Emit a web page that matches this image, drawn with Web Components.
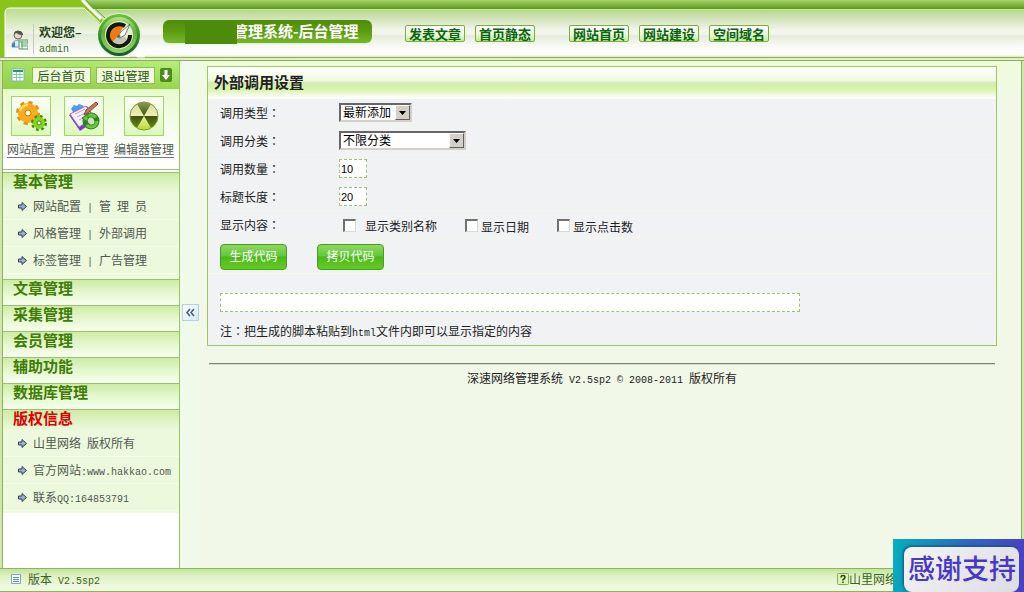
<!DOCTYPE html>
<html lang="zh-CN">
<head>
<meta charset="utf-8">
<meta name="viewport" content="width=device-width, initial-scale=1">
<title>后台管理</title>
<style>
    html {
        height: 100%;
    }

    body {
        margin: 0;
        min-height: 100%;
        display: flex;
        flex-direction: column;
        background: #f1f8e7;
        color: #222;
        font: 12px/16px "Noto Sans CJK SC", sans-serif;
    }

    .middle {
        flex: 1;
        display: flex;
        border: solid #8fb35c;
        border-width: 0 1px;
        margin: 0 2px;
        box-shadow: -2px 0 #d0e6ac, 2px 0 #d0e6ac;
    }

    .content {
        flex: 1;
        min-width: 0;
        padding: 5px 24px 16px 8px;
        background: linear-gradient(#eefddc, #f1f8e7 40px);
    }
</style>
</head>
<body>

<admin-header user="admin">
    <nav-link href="#post">发表文章</nav-link>
    <nav-link href="#static">首页静态</nav-link>
    <nav-link href="#home" apart>网站首页</nav-link>
    <nav-link href="#build">网站建设</nav-link>
    <nav-link href="#domain">空间域名</nav-link>
</admin-header>

<div class="middle">
    <admin-sidebar></admin-sidebar>
    <side-toggle></side-toggle>
    <main class="content">
        <call-settings></call-settings>
        <page-copyright></page-copyright>
    </main>
</div>

<status-bar></status-bar>
<thanks-badge>感谢支持</thanks-badge>

<script>
// half-width characters take half of a chinese one, so they get their own font and size
const half = text => text.replace(/[\x20-\x7e©]+/g, '<span class="half">$&</span>')

// styles that every shadow root needs
const base = `
    * { box-sizing: border-box; }
    a { color: inherit; text-decoration: none; }
    svg { display: block; }
    .half { font: 10px/12px "Liberation Mono", monospace; white-space: pre; }
    .colon { font-family: "Noto Sans CJK TC", sans-serif; }
`

class BaseElement extends HTMLElement {
    constructor() {
        super()
        this.root = this.attachShadow({mode: 'open'})
    }

    connectedCallback() {
        this.root.innerHTML = `<style>${base}</style>${this.render()}`
    }
}

class AdminHeader extends BaseElement {
    render() {
        return `
        <style>
            :host {
                display: flex;
                align-items: flex-start;
                height: 61px;
                background:
                    linear-gradient(#8fae62, #8fae62) 0 57px / 100% 1px no-repeat,
                    linear-gradient(#8fae62, #8fae62) 0 60px / 100% 1px no-repeat,
                    linear-gradient(#a4d56c, #5b971d 9px, #c4f08c 9px, #c4f08c 10px, #b5d78c 10px,
                        #d6e5c0 20px, #f2f5ea 30px, #f2f4ea 35px, #e5ebda 35px, #fbfcf9 48px,
                        #fff 55px, #dff0c4 56px, #dff0c4 61px);
            }

            .corner {
                display: grid;
                width: 145px;
                flex: none;
            }

            .corner > * {
                grid-area: 1 / 1;
            }

            .user {
                display: flex;
                gap: 5px;
                padding: 24px 0 0 11px;
            }

            .user svg {
                margin-top: 6px;
            }

            .name {
                border-left: 1px solid #c3ccb8;
                padding-left: 5px;
                height: 30px;
                color: #3c6a1c;
            }

            .name b {
                display: block;
                font-size: 12px;
                line-height: 15px;
                color: #24421a;
            }

            .title {
                display: flex;
                align-items: flex-start;
                width: 209px;
                height: 23px;
                margin: 20px 0 0 18px;
                padding-left: 22px;
                border-radius: 6px;
                background: linear-gradient(#4f8c08, #5c9c12 50%, #74b828);
                box-shadow: 0 1px 1px #dcebc8;
                color: #fff;
            }

            .cover {
                position: relative;
                width: 52px;
                height: 22px;
                margin-top: 2px;
                background: #4d8b0c;
            }

            h1 {
                margin: 0 0 0 -4px;
                font-size: 15px;
                line-height: 22px;
                white-space: nowrap;
            }

            nav {
                display: flex;
                gap: 10px;
                padding: 25px 0 0 33px;
            }
        </style>
        <div class="corner">
            <svg width="145" height="61" viewBox="0 0 145 61">
                <defs>
                    <linearGradient id="card" x2="0" y2="1">
                        <stop offset="0" stop-color="#b9dc8c"/><stop offset=".5" stop-color="#eef4e4"/>
                        <stop offset=".55" stop-color="#e4ecd8"/><stop offset="1" stop-color="#fff"/>
                    </linearGradient>
                    <linearGradient id="rim" x2="0" y2="1">
                        <stop offset="0" stop-color="#6cc434"/><stop offset=".6" stop-color="#2c8824"/>
                        <stop offset="1" stop-color="#14583c"/>
                    </linearGradient>
                    <linearGradient id="ring" x2="0" y2="1">
                        <stop offset="0" stop-color="#b4e48c"/><stop offset=".4" stop-color="#64ac3c"/>
                        <stop offset="1" stop-color="#94d464"/>
                    </linearGradient>
                </defs>
                <path d="M0 0H83L103 20V30H5V57H0z" fill="#8ac41a"/>
                <path d="M5 57V13q0-5 5-5H84L104 28L130 57z" fill="url(#card)"/>
                <path d="M5 57V13q0-5 5-5H84L101 24" fill="none" stroke="#fff"/>
                <path d="M82 0L101 19M132 50L138 56H145" fill="none" stroke="#fff" stroke-width="3"/>
                <path d="M86 0L105 18" stroke="#6ea830"/>
                <circle cx="119" cy="35" r="22" fill="#e4eed8"/>
                <circle cx="119" cy="35" r="21" fill="url(#rim)"/>
                <circle cx="119" cy="35" r="18" fill="url(#ring)"/>
                <circle cx="119" cy="35" r="14" fill="#dcf0cc"/>
                <circle cx="119" cy="35" r="10" fill="#f0e8dc"/>
                <path d="M119 35L113 42A9 9 0 0 1 123 27z" fill="#f47818"/>
                <path d="M119 35L113 42A9 9 0 0 0 127 38z" fill="#c4c4bc"/>
                <path d="M125 26A11 11 0 1 0 130 35" fill="none" stroke="#101c08" stroke-width="4"/>
                <path d="M117 37L121 32L130 24L125 35L120 38z" fill="#fff" stroke="#50603c" stroke-width=".8"/>
                <circle cx="119" cy="36" r="1.500" fill="#4b8420"/>
            </svg>
            <div class="user">
                <svg width="17" height="20" viewBox="0 0 17 20">
                    <circle cx="7" cy="5" r="4" fill="#f0d4b8" stroke="#666"/>
                    <path d="M3 4q1-4 5-3q4 0 4 4q-5 0-6-2z" fill="#555"/>
                    <path d="M1 17q0-7 6-7q4 0 5 3v4z" fill="#dcecf8" stroke="#6c9cc0"/>
                    <path d="M1 14l3-2v5H1z" fill="#3c80c0"/>
                    <path d="M8 10h9v9H8z" fill="#f4fff0" stroke="#4a9860"/>
                    <path d="M8 12h9M10 14h6M10 16h6" stroke="#58a468"/>
                    <path d="M11 11v8" stroke="#58a468"/>
                </svg>
                <div class="name"><b>欢迎您–</b>${half(this.getAttribute('user'))}</div>
            </div>
        </div>
        <div class="title"><span class="cover"></span><h1>管理系统-后台管理</h1></div>
        <nav><slot></slot></nav>`
    }
}

class NavLink extends BaseElement {
    render() {
        return `
        <style>
            :host {
                display: block;
            }

            :host([apart]) {
                margin-left: 24px;
            }

            a {
                display: block;
                width: 60px;
                border: 1px solid #78ae3c;
                border-radius: 2px;
                background: linear-gradient(#fff, #eefae0 50%, #c4ec98);
                color: #0a6414;
                font-size: 13px;
                font-weight: bold;
                line-height: 15px;
                text-align: center;
                white-space: nowrap;
            }
        </style>
        <a href="${this.getAttribute('href')}"><slot></slot></a>`
    }
}

class AdminSidebar extends BaseElement {
    render() {
        return `
        <style>
            :host {
                display: block;
                flex: none;
                width: 176px;
                border-right: 1px solid #9cc464;
                background: #fff;
            }

            .tools {
                display: flex;
                align-items: center;
                gap: 5px;
                height: 28px;
                padding: 0 6px 0 8px;
                background: linear-gradient(90deg, #84c43c55, #a4e45c00), linear-gradient(#b8f078, #98d450);
            }

            .tools svg {
                flex: none;
            }

            .tools a {
                width: 59px;
                border: 1px solid #8cc04c;
                background: #effbdc;
                color: #285410;
                line-height: 15px;
                text-align: center;
                white-space: nowrap;
            }

            .tools svg:first-child {
                margin-right: 2px;
            }

            .shortcuts {
                display: flex;
                justify-content: space-between;
                height: 81px;
                margin-bottom: 2px;
                padding: 7px 5px 0 4px;
                border-bottom: 1px solid #9cc070;
                background: linear-gradient(#e6fbcc, #fff 80%);
            }
        </style>
        <div class="tools">
            <svg width="14" height="14" viewBox="0 0 14 14">
                <path d="M1 1h12v12H1z" fill="#fff" stroke="#7ab4d4"/>
                <path d="M2 2h10v2H2z" fill="#38945c"/>
                <path d="M2 6.500h10M2 9.500h10M5.500 4v9M9 4v9" stroke="#8cc4b8"/>
            </svg>
            <a href="#index">后台首页</a>
            <a href="#logout">退出管理</a>
            <svg width="12" height="14" viewBox="0 0 12 14">
                <rect width="12" height="14" rx="2" fill="#4c8c1c"/>
                <path d="M4.500 2h3v5H10L6 12L2 7h2.500z" fill="#fff"/>
            </svg>
        </div>
        <div class="shortcuts">
            <short-cut label="网站配置">
                <svg width="32" height="32" viewBox="0 0 32 32">
                    <circle cx="13" cy="13" r="10" fill="none" stroke="#e09010" stroke-width="4" stroke-dasharray="4 3.850"/>
                    <circle cx="13" cy="13" r="6.500" fill="none" stroke="#fbac1c" stroke-width="7"/>
                    <path d="M5 11q2-6 8-6" fill="none" stroke="#ffe07c" stroke-width="2"/>
                    <circle cx="13" cy="13" r="3" fill="#f4fce8" stroke="#c87808"/>
                    <circle cx="24" cy="23" r="6" fill="none" stroke="#3c8c10" stroke-width="4" stroke-dasharray="2.500 2.200"/>
                    <circle cx="24" cy="23" r="4" fill="none" stroke="#84d424" stroke-width="4"/>
                    <circle cx="24" cy="23" r="2" fill="#eefcd8" stroke="#3c8c10"/>
                </svg>
            </short-cut>
            <short-cut label="用户管理">
                <svg width="32" height="32" viewBox="0 0 32 32">
                    <path d="M3 9l3-4l3 1l2-2l5 2l-9 9z" fill="#4c9ce8"/>
                    <path d="M1 15L19 6L28 20L12 31z" fill="#7840b8"/>
                    <path d="M2 14L18 6L26 18L11 27z" fill="#f6f0fc" stroke="#a06cd4"/>
                    <path d="M7 14l10-5M9 17l8-4M11 20l6-3" stroke="#b4a4cc"/>
                    <path d="M28 2L18 10l-2 5l5-3L30 4z" fill="#c87858" stroke="#804838"/>
                    <circle cx="23" cy="21" r="6" fill="none" stroke="#2c8420" stroke-width="5"/>
                    <circle cx="23" cy="21" r="6" fill="none" stroke="#6cc444" stroke-width="3" stroke-dasharray="14 5"/>
                    <path d="M14 18l6-4v8z" fill="#6cc444" stroke="#2c8420"/>
                    <circle cx="23" cy="21" r="3" fill="#c4ecac"/>
                </svg>
            </short-cut>
            <short-cut label="编辑器管理">
                <svg width="32" height="32" viewBox="0 0 32 32">
                    <defs>
                        <linearGradient id="light" gradientUnits="userSpaceOnUse" x1="0" y1="2" x2="0" y2="30">
                            <stop offset="0" stop-color="#d4dca0"/><stop offset=".5" stop-color="#ecf0b4"/>
                            <stop offset="1" stop-color="#b8dc2c"/>
                        </linearGradient>
                        <linearGradient id="dark" gradientUnits="userSpaceOnUse" x1="0" y1="2" x2="0" y2="30">
                            <stop offset="0" stop-color="#8c9c50"/><stop offset=".5" stop-color="#40540c"/>
                            <stop offset="1" stop-color="#6c8c18"/>
                        </linearGradient>
                    </defs>
                    <circle cx="16" cy="16" r="14" fill="url(#light)"/>
                    <path d="M16 16L9 4A14 14 0 0 1 23 4z" fill="url(#dark)"/>
                    <path d="M16 16H2A14 14 0 0 0 9 28z" fill="url(#dark)"/>
                    <path d="M16 16H30A14 14 0 0 1 23 28z" fill="url(#dark)"/>
                    <circle cx="16" cy="16" r="14" fill="none" stroke="#84983c"/>
                </svg>
            </short-cut>
        </div>
        <menu-section label="基本管理" open>
            <menu-item items="网站配置,管 理 员"></menu-item>
            <menu-item items="风格管理,外部调用"></menu-item>
            <menu-item items="标签管理,广告管理"></menu-item>
        </menu-section>
        <menu-section label="文章管理"></menu-section>
        <menu-section label="采集管理"></menu-section>
        <menu-section label="会员管理"></menu-section>
        <menu-section label="辅助功能"></menu-section>
        <menu-section label="数据库管理"></menu-section>
        <menu-section label="版权信息" open hot>
            <menu-item items="山里网络 版权所有"></menu-item>
            <menu-item items="官方网站:www.hakkao.com"></menu-item>
            <menu-item items="联系QQ:164853791"></menu-item>
        </menu-section>`
    }
}

class ShortCut extends BaseElement {
    render() {
        return `
        <style>
            :host {
                display: block;
            }

            a {
                display: flex;
                flex-direction: column;
                align-items: center;
                gap: 5px;
                color: #505850;
                white-space: nowrap;
            }

            .icon {
                width: 40px;
                height: 40px;
                padding: 3px;
                border: 1px solid #a4d470;
                background: linear-gradient(#fcfff8, #dcf8b8);
            }

            .label {
                height: 17px;
                border-bottom: 1px solid #707870;
            }
        </style>
        <a href="#shortcut"><span class="icon"><slot></slot></span><span class="label">${this.getAttribute('label')}</span></a>`
    }
}

class MenuSection extends BaseElement {
    render() {
        return `
        <style>
            :host {
                display: block;
                box-sizing: border-box;
                min-height: 26px;
                border-top: 1px solid #9cc070;
                background: linear-gradient(#cdeca4, #e4f7cc 12px, #f6fdee 24px);
            }

            :host([open]) {
                padding-bottom: 5px;
                background: linear-gradient(#cdeca4, #ecf9dc 20px);
            }

            :host([hot]) {
                padding-bottom: 2px;
            }

            h2 {
                margin: 0;
                padding: 0 0 5px 10px;
                color: #3f7c08;
                font-size: 15px;
                line-height: 15px;
            }

            :host([hot]) h2 {
                color: #e00000;
            }
        </style>
        <h2>${this.getAttribute('label')}</h2>
        <slot></slot>`
    }
}

class MenuItem extends BaseElement {
    render() {
        const links = this.getAttribute('items').split(',').map(item => `<a href="#menu">${half(item)}</a>`)

        return `
        <style>
            :host {
                display: flex;
                align-items: center;
                box-sizing: border-box;
                height: 27px;
                padding-left: 15px;
                border-bottom: 1px solid #f6fdec;
                color: #505850;
                white-space: nowrap;
            }

            svg {
                flex: none;
                margin-right: 6px;
            }
        </style>
        <svg width="9" height="9" viewBox="0 0 9 9">
            <path d="M.5 3h3.500V.5L8.500 4.500L4 8.500V6H.5z" fill="#9cb0c8" stroke="#2c3c54"/>
        </svg>
        <span>${links.join('<span class="half"> | </span>')}</span>`
    }
}

class SideToggle extends BaseElement {
    render() {
        return `
        <style>
            :host {
                display: flex;
                align-items: center;
                box-sizing: border-box;
                flex: none;
                width: 19px;
                padding: 0 0 4px 2px;
                background: #f0faea;
            }

            button {
                width: 17px;
                height: 17px;
                padding: 0;
                border: 1px solid #b4d0e4;
                background: linear-gradient(135deg, #fff, #d4e8f8);
            }
        </style>
        <button type="button" aria-label="收起菜单">
            <svg width="15" height="15" viewBox="0 0 15 15">
                <path d="M7 4L4 7.500L7 11M11 4L8 7.500L11 11" fill="none" stroke="#3c5c84" stroke-width="1.500"/>
            </svg>
        </button>`
    }
}

class CallSettings extends BaseElement {
    render() {
        return `
        <style>
            :host {
                display: block;
                border: 1px solid #9cc85c;
                background: #f0f2f4;
            }

            h2 {
                margin: 0;
                padding: 0 6px 2px;
                background: linear-gradient(#fff, #eefbdf 14px, #d5eab8 15px, #d6f4a8 22px, #fff 31px);
                color: #222;
                font-size: 15px;
                line-height: 30px;
            }

            .row {
                display: grid;
                grid-template-columns: 119px 1fr;
                align-items: center;
                height: 28px;
                padding: 0 12px;
                border-bottom: 1px solid #f2f7ec;
            }

            .row > label, .row > .caption {
                white-space: nowrap;
            }

            .select {
                display: inline-grid;
                justify-self: start;
                width: 73px;
            }

            .select.wide {
                width: 127px;
            }

            .select > * {
                grid-area: 1 / 1;
            }

            select {
                appearance: none;
                width: 100%;
                height: 19px;
                padding: 0 18px 2px 2px;
                border: 2px solid;
                border-color: #666 #d4d0c8 #d4d0c8 #666;
                border-radius: 0;
                background: #fff;
                color: #000;
                font: 12px/14px "Noto Sans CJK SC", sans-serif;
            }

            .arrow {
                justify-self: end;
                align-self: center;
                width: 15px;
                height: 15px;
                margin-right: 2px;
                border: 1px solid;
                border-color: #f8f8f4 #606060 #606060 #f8f8f4;
                background: #d4d0c8;
                pointer-events: none;
            }

            input[type="text"] {
                height: 19px;
                border: 1px dashed #9cc474;
                background: #fff;
                color: #000;
                font: 11px/14px "Liberation Sans", sans-serif;
            }

            .number {
                width: 28px;
                padding: 0 1px;
            }

            .checks {
                display: flex;
                gap: 28px;
                padding: 4px 0 0 4px;
            }

            .checks label {
                display: flex;
                align-items: center;
                gap: 3px;
                white-space: nowrap;
            }

            input[type="checkbox"] {
                appearance: none;
                width: 13px;
                height: 13px;
                margin: 0 0 2px;
                border: solid;
                border-width: 2px 1px 1px 2px;
                border-color: #707070 #d8d8d4 #d8d8d4 #707070;
                background: #fff;
            }

            .buttons {
                display: flex;
                gap: 30px;
                padding: 5px 12px 3px;
                border-bottom: 1px solid #f4f9e8;
            }

            .buttons button {
                width: 67px;
                height: 26px;
                padding: 0 0 2px;
                border: 1px solid #4a9c1c;
                border-radius: 4px;
                background: linear-gradient(#8cd860, #64c83c 45%, #4cb818 50%, #64cc24);
                color: #fff;
                font: 12px/16px "Noto Sans CJK SC", sans-serif;
            }

            .result {
                padding: 19px 12px 11px;
            }

            .result input {
                display: block;
                width: 100%;
                max-width: 580px;
            }

            p {
                margin: 0;
                padding: 0 12px 5px;
            }
        </style>
        <form>
            <h2>外部调用设置</h2>
            <div class="row">
                <label for="type">调用类型<span class="colon" lang="zh-TW">：</span></label>
                <div class="select">
                    <select id="type"><option>最新添加</option></select>
                    ${this.arrow()}
                </div>
            </div>
            <div class="row">
                <label for="category">调用分类<span class="colon" lang="zh-TW">：</span></label>
                <div class="select wide">
                    <select id="category"><option>不限分类</option></select>
                    ${this.arrow()}
                </div>
            </div>
            <div class="row">
                <label for="count">调用数量<span class="colon" lang="zh-TW">：</span></label>
                <input class="number" type="text" id="count" value="10">
            </div>
            <div class="row">
                <label for="length">标题长度<span class="colon" lang="zh-TW">：</span></label>
                <input class="number" type="text" id="length" value="20">
            </div>
            <div class="row">
                <span class="caption">显示内容<span class="colon" lang="zh-TW">：</span></span>
                <div class="checks">
                    <label><input type="checkbox"><span>${half(' ')}显示类别名称</span></label>
                    <label><input type="checkbox"><span>显示日期</span></label>
                    <label><input type="checkbox"><span>显示点击数</span></label>
                </div>
            </div>
            <div class="buttons">
                <button type="button">生成代码</button>
                <button type="button">拷贝代码</button>
            </div>
            <div class="result"><input type="text" aria-label="代码"></div>
            <p>注<span class="colon" lang="zh-TW">：</span>${half('把生成的脚本粘贴到html文件内即可以显示指定的内容')}</p>
        </form>`
    }

    arrow() {
        return `<span class="arrow"><svg width="13" height="13" viewBox="0 0 13 13"><path d="M3 5h7L6.500 9z"/></svg></span>`
    }
}

class PageCopyright extends BaseElement {
    render() {
        return `
        <style>
            :host {
                display: block;
                margin: 17px 2px 0;
                padding-top: 6px;
                border-top: 1px solid #808474;
                box-shadow: inset 0 1px #d8dccc;
                text-align: center;
            }
        </style>
        ${half('深速网络管理系统 V2.5sp2 © 2008-2011 版权所有')}`
    }
}

class StatusBar extends BaseElement {
    render() {
        return `
        <style>
            :host {
                display: flex;
                align-items: center;
                gap: 7px;
                height: 24px;
                padding: 0 127px 2px 11px;
                box-sizing: border-box;
                border: solid #8fb35c;
                border-width: 1px 0;
                background: linear-gradient(#c4e49c, #e0f2c8 8px, #f0fae2 20px);
                color: #3c6420;
            }

            .owner {
                display: flex;
                align-items: center;
                margin-left: auto;
            }
        </style>
        <svg width="10" height="10" viewBox="0 0 10 10">
            <path d="M.5 .5h9v9h-9z" fill="#f4f8fc" stroke="#8ca4bc"/>
            <path d="M2 3.500h6M2 5.500h6M2 7.500h6" stroke="#6c8cac"/>
        </svg>
        <span>${half('版本 V2.5sp2')}</span>
        <a class="owner" href="#owner">
            <svg width="12" height="12" viewBox="0 0 12 12">
                <rect x=".5" y=".5" width="11" height="11" rx="1" fill="#dcf4bc" stroke="#84ac54"/>
                <path d="M4 4.500Q4 2.500 6 2.500T8 4.500Q8 5.500 6 6.500V7.500M6 8.500v1.500" fill="none" stroke="#28480c" stroke-width="1.500"/>
            </svg>
            山里网络
        </a>`
    }
}

// floats over the bottom right corner of the window
class ThanksBadge extends BaseElement {
    render() {
        return `
        <style>
            :host {
                position: fixed;
                right: 0;
                bottom: 0;
                padding: 8px 5px 0 11px;
                background: linear-gradient(100deg, #04b0bc, #2c6cc0 50%, #4c3cc4);
            }

            span {
                display: block;
                padding: 0 3px 4px 4px;
                border-radius: 8px;
                background: linear-gradient(135deg, #f4f4f4, #dcdce4);
                box-shadow: -1px -1px 3px #14507c;
                color: #4838c4;
                font-size: 27px;
                font-weight: 500;
                line-height: 41px;
                white-space: nowrap;
            }
        </style>
        <span><slot></slot></span>`
    }
}

customElements.define('nav-link', NavLink)
customElements.define('short-cut', ShortCut)
customElements.define('menu-item', MenuItem)
customElements.define('menu-section', MenuSection)
customElements.define('admin-header', AdminHeader)
customElements.define('admin-sidebar', AdminSidebar)
customElements.define('side-toggle', SideToggle)
customElements.define('call-settings', CallSettings)
customElements.define('page-copyright', PageCopyright)
customElements.define('status-bar', StatusBar)
customElements.define('thanks-badge', ThanksBadge)
</script>
</body>
</html>
